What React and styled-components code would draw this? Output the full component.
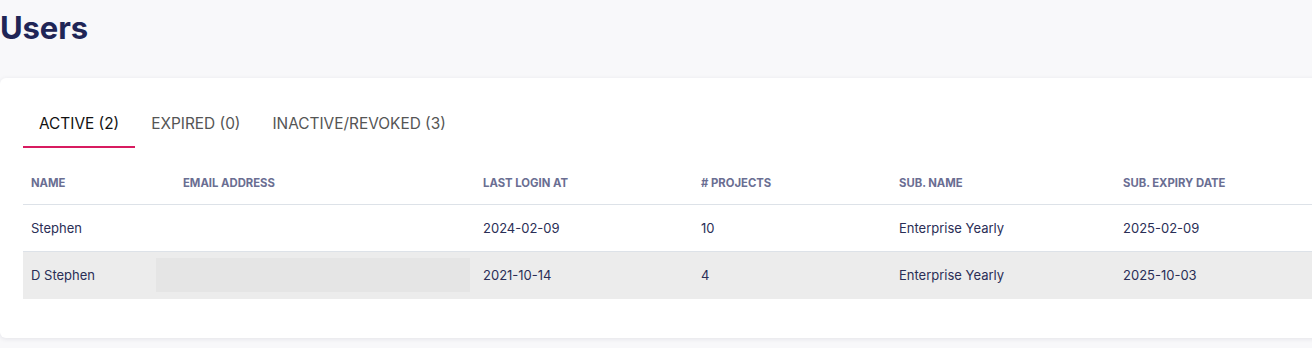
import React from 'react';
import styled, { createGlobalStyle } from 'styled-components';

const GlobalStyle = createGlobalStyle`
  body {
    margin: 0;
    background: #f8f8fa;
    font-family: Inter, "Noto Sans", sans-serif;
    overflow: hidden;
  }
`;

const Page = styled.div`
  width: 1330px;
  height: 348px;
  background: #f8f8fa;
`;

const Title = styled.h1`
  margin: 0;
  padding: 9px 0 0 0;
  height: 78px;
  box-sizing: border-box;
  font-size: 31px;
  font-weight: 700;
  color: #202556;
  letter-spacing: -0.1px;
  line-height: 38px;
`;

const Card = styled.section`
  background: #fff;
  border-radius: 6px;
  box-shadow: 0 1px 5px rgba(20, 25, 60, 0.09);
  padding: 22px 0 40px 23px;
  height: 260px;
  box-sizing: border-box;
`;

const Tabs = styled.div`
  display: flex;
  height: 48px;
`;

const Tab = styled.button`
  background: transparent;
  border: none;
  padding: 0 16px;
  font-family: inherit;
  font-size: 15.4px;
  color: ${(p) => (p.active ? '#111' : '#555')};
  border-bottom: 2px solid ${(p) => (p.active ? '#d81b60' : 'transparent')};
  cursor: pointer;
`;

const Table = styled.table`
  margin-top: 13px;
  border-collapse: collapse;
  width: 1289px;
  table-layout: fixed;
  font-size: 13px;
  color: #2a2e56;
`;

const Th = styled.th`
  text-align: left;
  padding: 0 8px;
  height: 43px;
  font-size: 11.3px;
  font-weight: 700;
  color: #6a6e92;
  border-bottom: 1px solid #dde2e8;
`;

const Row = styled.tr`
  background: ${(p) => (p.shade ? '#ececec' : 'transparent')};
  border-bottom: 1px solid ${(p) => (p.shade ? 'transparent' : '#dde2e8')};
`;

const Td = styled.td`
  padding: 0 8px;
  height: 46px;
  font-weight: 400;
  white-space: nowrap;
`;

const Hidden = styled.div`
  margin-left: -27px;
  width: 314px;
  height: 34px;
  background: #e5e5e5;
`;

const columns = [
  { label: 'Name', width: 152 },
  { label: 'Email Address', width: 300 },
  { label: 'Last Login At', width: 218 },
  { label: '# Projects', width: 198 },
  { label: 'Sub. Name', width: 224 },
  { label: 'Sub. Expiry Date' }
];

const users = [
  { name: 'Stephen', email: '', login: '2024-02-09', projects: 10, sub: 'Enterprise Yearly', expiry: '2025-02-09' },
  { name: 'D Stephen', email: 'hidden', login: '2021-10-14', projects: 4, sub: 'Enterprise Yearly', expiry: '2025-10-03' }
];

export default function App() {
  return (
    <Page>
      <GlobalStyle />
      <Title>Users</Title>
      <Card>
        <Tabs>
          <Tab active>ACTIVE (2)</Tab>
          <Tab>EXPIRED (0)</Tab>
          <Tab>INACTIVE/REVOKED (3)</Tab>
        </Tabs>
        <Table>
          <colgroup>
            {columns.map((c) => (
              <col key={c.label} style={c.width ? { width: c.width } : undefined} />
            ))}
          </colgroup>
          <thead>
            <tr>
              {columns.map((c) => (
                <Th key={c.label}>{c.label.toUpperCase()}</Th>
              ))}
            </tr>
          </thead>
          <tbody>
            {users.map((u, i) => (
              <Row key={u.name} shade={i % 2 === 1}>
                <Td>{u.name}</Td>
                <Td>{u.email && <Hidden />}</Td>
                <Td>{u.login}</Td>
                <Td>{u.projects}</Td>
                <Td>{u.sub}</Td>
                <Td>{u.expiry}</Td>
              </Row>
            ))}
          </tbody>
        </Table>
      </Card>
    </Page>
  );
}
